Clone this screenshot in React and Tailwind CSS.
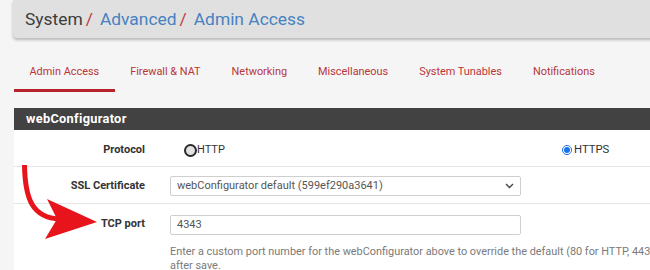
import React from 'react';

const tabs = ['Admin Access', 'Firewall & NAT', 'Networking', 'Miscellaneous', 'System Tunables', 'Notifications'];

function Row({ label, children, border = true }) {
  return (
    <div className={`flex ${border ? 'border-b border-[#e6e6e6]' : ''}`}>
      <div className="w-[146px] shrink-0 pr-[15px] text-right text-[11px] font-bold text-[#333]">{label}</div>
      <div className="flex-1 pl-[10px]">{children}</div>
    </div>
  );
}

export default function App() {
  return (
    <div className="relative w-[650px] h-[270px] overflow-hidden bg-[#f5f5f5] font-['Roboto',sans-serif]">
      {/* breadcrumb */}
      <div className="ml-[13px] w-[660px] h-[38px] bg-[#e0e0e0] rounded-bl shadow-[0_2px_3px_rgba(0,0,0,0.25)] flex items-center pl-[12px] text-[17.4px]">
        <span className="text-[#3c3c3c]">System</span>
        <span className="text-[#c23b3b] ml-[3px] mr-[7px]">/</span>
        <span className="text-[#4782c0]">Advanced</span>
        <span className="text-[#c23b3b] ml-[3px] mr-[7px]">/</span>
        <span className="text-[#4782c0]">Admin Access</span>
      </div>

      {/* tabs */}
      <div className="ml-[14px] mt-[17px] flex">
        {tabs.map((t, i) => (
          <div key={t} className="flex flex-col">
            <div className="px-[15.5px] h-[34px] flex items-center text-[10.9px] text-[#b8353b]">{t}</div>
            <div className={`h-[3px] ${i === 0 ? 'bg-[#b8232b]' : ''}`} />
          </div>
        ))}
      </div>

      {/* panel */}
      <div className="ml-[14px] mt-[16px] w-[660px] bg-white">
        <div className="h-[22px] bg-[#424242] flex items-center pl-[12px] text-[12.8px] font-bold tracking-[0.3px] text-white">webConfigurator</div>
        <Row label={<div className="h-[36px] pt-[4px] flex items-center justify-end">Protocol</div>}>
          <div className="h-[36px] pt-[4px] flex items-center text-[11px] text-[#333]">
            <div className="w-[392px] flex items-center pl-[14px]">
              <span className="w-[13px] h-[13px] rounded-full border-2 border-[#2a2a2a] bg-[#e2e2e2]" />
              <span>HTTP</span>
            </div>
            <div className="flex items-center">
              <span className="w-[10px] h-[10px] rounded-full bg-[#1a73e8] border border-[#1a73e8] flex items-center justify-center">
                <span className="w-[6px] h-[6px] rounded-full bg-[#1a73e8] ring-1 ring-white" />
              </span>
              <span className="ml-[2px] text-[11.3px]">HTTPS</span>
            </div>
          </div>
        </Row>
        <Row label={<div className="h-[36px] pt-[2px] flex items-center justify-end">SSL Certificate</div>}>
          <div className="h-[36px] pt-[2px] flex items-center">
            <div className="w-[351px] h-[20px] border border-[#cfcfcf] rounded-[2px] flex items-center justify-between pl-[6px] pr-[6px] text-[11px] text-[#555]">
              <span>webConfigurator default (599ef290a3641)</span>
              <svg width="9" height="6" viewBox="0 0 9 6"><path d="M1 1l3.5 3.5L8 1" fill="none" stroke="#444" strokeWidth="1.4" /></svg>
            </div>
          </div>
        </Row>
        <Row border={false} label={<div className="h-[38px] pt-[2px] flex items-center justify-end">TCP port</div>}>
          <div className="pt-[11px]">
            <div className="w-[351px] h-[20px] border border-[#cfcfcf] rounded-[2px] flex items-center pl-[6px] text-[11px] text-[#555]">4343</div>
            <p className="mt-[10px] text-[10.9px] leading-[13.5px] text-[#7a7a7a] whitespace-nowrap">
              Enter a custom port number for the webConfigurator above to override the default (80 for HTTP, 443 for HTTPS).
              <br />after save.
            </p>
          </div>
        </Row>
      </div>

      {/* annotation arrow */}
      <svg className="absolute left-0 top-0 pointer-events-none" width="650" height="270" viewBox="0 0 650 270">
        <path d="M24.5 165 C 25 200, 33 218, 60 219" fill="none" stroke="#e8141c" strokeWidth="5" />
        <polygon points="47,199 97,222 45,239 57,219" fill="#e8141c" />
      </svg>
    </div>
  );
}
